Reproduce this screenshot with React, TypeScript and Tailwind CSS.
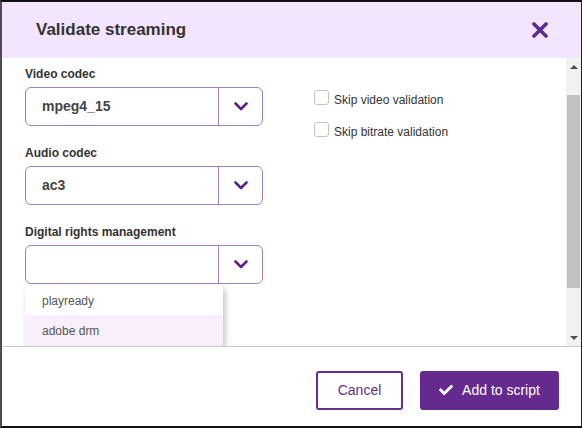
import { FaCheck } from 'react-icons/fa'

function Chevron() {
  return (
    <svg width="14" height="9" viewBox="0 0 14 9" fill="none">
      <polyline points="1.5,1.5 7,7 12.5,1.5" stroke="#5b2386" strokeWidth="2.6" strokeLinecap="round" strokeLinejoin="round" />
    </svg>
  )
}

function Select({ value }: { value: string }) {
  return (
    <div className="flex h-[39px] w-[238px] rounded-[6px] border border-[#a27fc2] bg-white">
      <div className="flex flex-1 items-center pl-[16px] text-[14px] font-bold text-[#444]">{value}</div>
      <div className="flex w-[44px] items-center justify-center border-l border-[#a27fc2]">
        <Chevron />
      </div>
    </div>
  )
}

function Field({ label, value, children }: { label: string; value: string; children?: React.ReactNode }) {
  return (
    <div className="relative">
      <div className="mb-[5px] text-[12px] font-bold leading-[16px] text-[#333]">{label}</div>
      <Select value={value} />
      {children}
    </div>
  )
}

function Checkbox({ label }: { label: string }) {
  return (
    <label className="flex h-[32px] items-start gap-[5px] text-[12px] leading-[16px] text-[#333]">
      <span className="mt-[-1px] h-[15px] w-[15px] rounded-[3px] border border-[#c4c4c4] bg-white" />
      <span className="mt-[1px]">{label}</span>
    </label>
  )
}

function Scrollbar() {
  return (
    <div className="flex w-[15px] flex-col bg-[#f1f1f1]">
      <div className="flex h-[17px] items-center justify-center">
        <div className="h-0 w-0 border-x-[4px] border-b-[4px] border-x-transparent border-b-[#505050]" />
      </div>
      <div className="h-[20px]" />
      <div className="mx-[1px] h-[193px] bg-[#c1c1c1]" />
      <div className="flex-1" />
      <div className="flex h-[17px] items-center justify-center">
        <div className="h-0 w-0 border-x-[4px] border-t-[4px] border-x-transparent border-t-[#505050]" />
      </div>
    </div>
  )
}

export default function App() {
  return (
    <div className="flex h-[428px] w-[582px] flex-col border-y-2 border-l-2 border-r border-y-[#111] border-l-[#4d4d4d] border-r-[#222] bg-white font-['Liberation_Sans',Arial,sans-serif]">
      <header className="flex h-[56px] shrink-0 items-center justify-between bg-[#f3e5fd] pl-[34px] pr-[33px]">
        <h1 className="text-[17px] font-bold text-[#333]">Validate streaming</h1>
        <button className="flex h-[16px] w-[16px] items-center justify-center">
          <svg width="16" height="16" viewBox="0 0 16 16">
            <line x1="2" y1="2" x2="14" y2="14" stroke="#5f2a8c" strokeWidth="3.6" strokeLinecap="round" />
            <line x1="14" y1="2" x2="2" y2="14" stroke="#5f2a8c" strokeWidth="3.6" strokeLinecap="round" />
          </svg>
        </button>
      </header>

      <div className="flex h-[288px] shrink-0 overflow-hidden">
        <div className="relative flex flex-1 gap-[51px] pl-[23px] pt-[8px]">
          <div className="flex w-[238px] flex-col gap-[19px]">
            <Field label="Video codec" value="mpeg4_15" />
            <Field label="Audio codec" value="ac3" />
            <Field label="Digital rights management" value="">
              <ul className="absolute left-0 top-full z-10 mt-[2px] w-[198px] bg-white text-[12px] text-[#555] shadow-[2px_3px_6px_rgba(0,0,0,0.25)]">
                <li className="flex h-[29px] items-center pl-[17px]">playready</li>
                <li className="flex h-[32px] items-center bg-[#f9eefb] pl-[17px]">adobe drm</li>
              </ul>
            </Field>
          </div>
          <div className="flex flex-col pt-[25px]">
            <Checkbox label="Skip video validation" />
            <Checkbox label="Skip bitrate validation" />
          </div>
        </div>
        <Scrollbar />
      </div>

      <footer className="flex flex-1 items-center justify-end gap-[17px] border-t border-[#c9c9c9] pr-[22px] pt-[7px]">
        <button className="h-[39px] w-[87px] rounded-[3px] border-2 border-[#6a2c91] bg-white text-[14px] text-[#6a2c91]">
          Cancel
        </button>
        <button className="flex h-[39px] w-[139px] items-center justify-center gap-[9px] rounded-[3px] bg-[#652a8e] text-[14px] text-white">
          <FaCheck className="h-[14px] w-[14px]" />
          Add to script
        </button>
      </footer>
    </div>
  )
}
